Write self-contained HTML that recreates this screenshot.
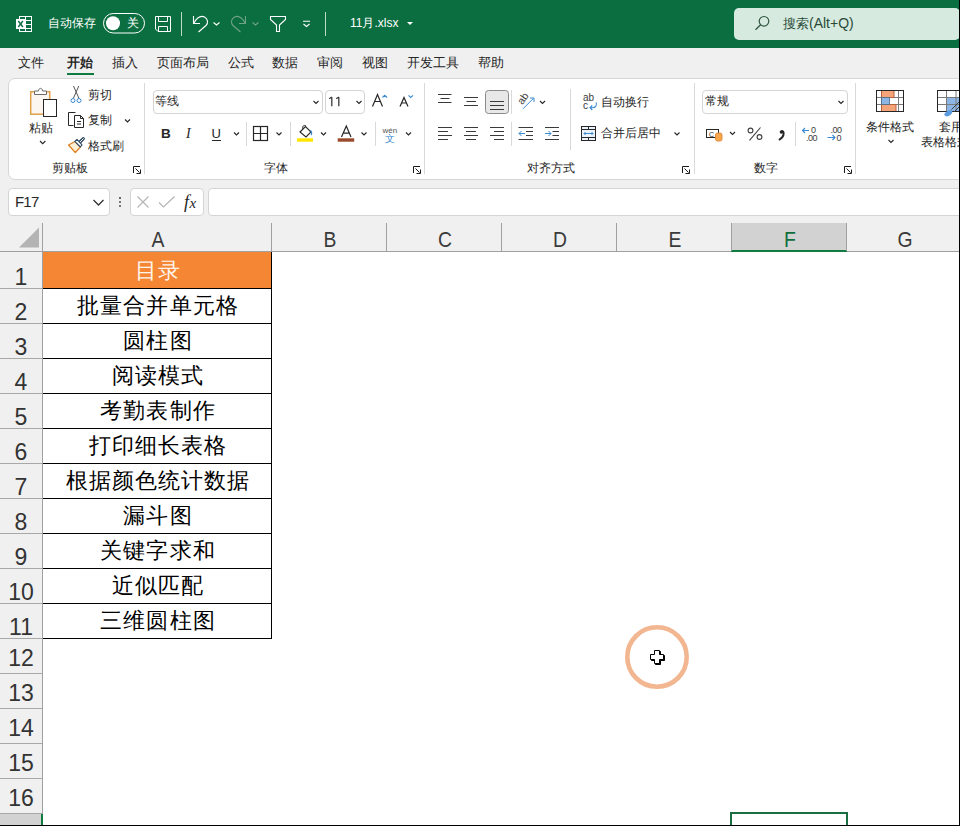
<!DOCTYPE html>
<html><head><meta charset="utf-8">
<style>
*{box-sizing:border-box;margin:0;padding:0}
html,body{width:960px;height:826px;overflow:hidden;background:#F0F0F0;font-family:"Liberation Sans",sans-serif;color:#262626}
.a{position:absolute;white-space:nowrap}
svg{position:absolute;left:0;top:0;overflow:visible}
#title{left:0;top:0;width:960px;height:48px;background:#0B6E40}
#ribbon{left:8px;top:78px;width:980px;height:102px;background:#fff;border:1px solid #D6D6D6;border-radius:7px}
.mt{font-size:13px;top:54px;line-height:17px;color:#262626}
.rl{font-size:12px;line-height:16px;color:#262626}
.sep{position:absolute;width:1px;background:#D9D9D9}
.box{position:absolute;background:#fff;border:1px solid #D4D4D4;border-radius:4px}
.rh{position:absolute;left:0;width:42px;font-size:23px;line-height:26px;text-align:center;color:#333}
.rl2{position:absolute;left:0;width:42px;height:1px;background:#A8A8A8}
.ch{position:absolute;top:228px;margin-left:1px;width:114px;font-size:22px;line-height:24px;text-align:center;color:#3a3a3a;transform:scaleX(0.88)}
.ct{position:absolute;left:43px;width:228px;font-size:22px;line-height:30px;text-align:center;color:#000;letter-spacing:1.1px;padding-left:2px}
.bl{position:absolute;left:43px;width:229px;height:1px;background:#000}
</style></head><body>
<!-- TITLE BAR -->
<div id="title" class="a"></div>
<svg width="960" height="48">
 <g fill="none" stroke="#fff" stroke-width="1">
  <rect x="19.5" y="16.5" width="12" height="15"/>
  <path d="M25.5 16v16 M19 20.5h13 M25 24.5h7 M25 28.5h7"/>
 </g>
 <rect x="16" y="19" width="9.5" height="10" fill="#fff"/>
 <path d="M18.3 21l4.6 6 M22.9 21l-4.6 6" stroke="#0B6E40" stroke-width="1.4"/>
 <rect x="103.5" y="13.5" width="41" height="19.5" rx="9.75" fill="none" stroke="#fff"/>
 <circle cx="113" cy="23.2" r="7" fill="#fff"/>
 <g fill="none" stroke="#fff" stroke-width="1">
  <path d="M155.5 16.5H170.5V31.5H158L155.5 29Z M158.5 16.5V21.5H167.5V16.5 M158.5 31.5V26.5H167.5V31.5"/>
 </g>
 <rect x="181" y="12" width="1" height="24" fill="#BFD9C9"/>
 <g fill="none" stroke="#fff" stroke-width="1.1">
  <path d="M193.5 16V23.5H200"/>
  <path d="M194 23C197 17.5 201 15.5 204.5 17 C208 19 208.5 23 206 25.5 L198.5 32"/>
  <path d="M213.5 22.5L216.5 25L219.5 22.5"/>
 </g>
 <g fill="none" stroke="#6FA287" stroke-width="1.1">
  <path d="M245.5 16V23.5H239"/>
  <path d="M245 23C242 17.5 238 15.5 234.5 17 C231 19 230.5 23 233 25.5 L240.5 32"/>
  <path d="M252.5 22.5L255.5 25L258.5 22.5"/>
 </g>
 <path d="M270.5 16.5H285.5V19.5L279.5 25V31.5H276.5V25L270.5 19.5Z" fill="none" stroke="#fff" stroke-width="1.1"/>
 <path d="M303 21.2H310 M303.5 24L306.5 26.5L309.5 24" fill="none" stroke="#fff" stroke-width="1.1"/>
 <rect x="325" y="12" width="1" height="24" fill="#BFD9C9"/>
 <path d="M407 22H413L410 25Z" fill="#fff"/>
</svg>
<div class="a" style="left:48px;top:15px;font-size:12px;line-height:16px;color:#fff">自动保存</div>
<div class="a" style="left:127px;top:15px;font-size:12px;line-height:16px;color:#fff">关</div>
<div class="a" style="left:350px;top:15px;font-size:12px;line-height:17px;color:#fff">11月.xlsx</div>
<div class="a" style="left:734px;top:8px;width:226px;height:32px;background:#D6EADF;border-radius:5px"></div>
<svg width="960" height="48">
 <circle cx="764" cy="21.3" r="4.8" fill="none" stroke="#30563F" stroke-width="1.2"/>
 <path d="M760.6 24.7L755.5 29.8" stroke="#30563F" stroke-width="1.3"/>
</svg>
<div class="a" style="left:783px;top:15px;font-size:13px;line-height:17px;color:#2A4A38">搜索<span style="font-size:14px">(Alt+Q)</span></div>
<!-- MENU -->
<div class="a mt" style="left:18px">文件</div>
<div class="a mt" style="left:67px;font-weight:bold">开始</div>
<div class="a" style="left:67px;top:73px;width:27px;height:2px;background:#107C41"></div>
<div class="a mt" style="left:112px">插入</div>
<div class="a mt" style="left:157px">页面布局</div>
<div class="a mt" style="left:228px">公式</div>
<div class="a mt" style="left:272px">数据</div>
<div class="a mt" style="left:317px">审阅</div>
<div class="a mt" style="left:362px">视图</div>
<div class="a mt" style="left:407px">开发工具</div>
<div class="a mt" style="left:478px">帮助</div>
<!-- RIBBON -->
<div id="ribbon" class="a"></div>
<div class="a rl" style="left:29px;top:120px">粘贴</div>
<div class="a rl" style="left:88px;top:87px">剪切</div>
<div class="a rl" style="left:88px;top:112px">复制</div>
<div class="a rl" style="left:88px;top:138px">格式刷</div>
<div class="a rl" style="left:52px;top:160px">剪贴板</div>
<div class="a rl" style="left:264px;top:160px">字体</div>
<div class="a rl" style="left:527px;top:160px">对齐方式</div>
<div class="a rl" style="left:601px;top:94px">自动换行</div>
<div class="a rl" style="left:601px;top:125px">合并后居中</div>
<div class="a rl" style="left:754px;top:160px">数字</div>
<div class="a rl" style="left:866px;top:119px">条件格式</div>
<div class="a rl" style="left:939px;top:119px">套用</div>
<div class="a rl" style="left:921px;top:134px">表格格式</div>
<div class="sep" style="left:144px;top:83px;height:91px"></div>
<div class="sep" style="left:424px;top:83px;height:91px"></div>
<div class="sep" style="left:694px;top:83px;height:91px"></div>
<div class="sep" style="left:855px;top:83px;height:91px"></div>
<div class="sep" style="left:246px;top:122px;height:24px"></div>
<div class="sep" style="left:290px;top:122px;height:24px"></div>
<div class="sep" style="left:375px;top:122px;height:24px"></div>
<div class="sep" style="left:511px;top:90px;height:24px"></div>
<div class="sep" style="left:511px;top:122px;height:24px"></div>
<div class="sep" style="left:570px;top:89px;height:61px"></div>
<div class="sep" style="left:795px;top:122px;height:24px"></div>
<div class="box" style="left:153px;top:90px;width:170px;height:24px"></div>
<div class="box" style="left:325px;top:90px;width:40px;height:24px"></div>
<div class="box" style="left:702px;top:90px;width:146px;height:24px"></div>
<div class="a rl" style="left:155px;top:93px">等线</div>

<div class="a rl" style="left:705px;top:93px">常规</div>
<svg width="960" height="190">
 <!-- clipboard -->
 <rect x="30.7" y="91.7" width="19" height="22.5" fill="#FBF6EF" stroke="#E0A04A" stroke-width="1.5"/>
 <path d="M34.5 94.5V91H38.5C38.5 87.5 42.5 87.5 42.5 91H46.5V94.5Z" fill="#fff" stroke="#6B6B6B" stroke-width="1"/>
 <rect x="43.5" y="99.5" width="13" height="17" fill="#fff" stroke="#262626" stroke-width="1"/>
 <!-- chevrons -->
 <g fill="none" stroke="#262626" stroke-width="1.1">
  <path d="M40 141L42.7 143.7L45.4 141"/>
  <path d="M125 119.5L127.5 122L130 119.5"/>
  <path d="M313.5 101L316 103.5L318.5 101"/>
  <path d="M356.5 101L359 103.5L361.5 101"/>
  <path d="M234 132.5L236.5 135L239 132.5"/>
  <path d="M276.5 132.5L279 135L281.5 132.5"/>
  <path d="M321 132.5L323.5 135L326 132.5"/>
  <path d="M361.5 132.5L364 135L366.5 132.5"/>
  <path d="M406 132.5L408.5 135L411 132.5"/>
  <path d="M540 101L542.5 103.5L545 101"/>
  <path d="M674.5 132.5L677 135L679.5 132.5"/>
  <path d="M838.5 101L841 103.5L843.5 101"/>
  <path d="M730 132L732.5 134.5L735 132"/>
  <path d="M888.5 140L891 142.5L893.5 140"/>
 </g>
 <!-- scissors -->
 <path d="M73.5 86L79 98.5 M78.8 86L73.3 98.5" stroke="#555" stroke-width="1"/>
 <circle cx="73" cy="100.5" r="2" fill="none" stroke="#3A8AD0" stroke-width="1"/>
 <circle cx="79" cy="100.5" r="2" fill="none" stroke="#3A8AD0" stroke-width="1"/>
 <!-- copy -->
 <path d="M75.5 112.5H68.5V125.5H73.5" fill="none" stroke="#262626" stroke-width="1"/>
 <path d="M74.5 115.5H80.5L83.5 118.5V127.5H74.5Z M80.5 115.5V118.5H83.5 M77 121.5H81 M77 124H81" fill="#fff" stroke="#262626" stroke-width="1"/>
 <!-- format painter -->
 <path d="M75 141.5L68.5 145L75.3 152.5L80.5 147Z" fill="#FFF0D6" stroke="#E07F1F" stroke-width="1.2" stroke-linejoin="round"/>
 <path d="M79 143L83.3 138.7" stroke="#2E4A63" stroke-width="3.2" stroke-linecap="round"/>
 <path d="M79 143L83.3 138.7" stroke="#fff" stroke-width="1" stroke-linecap="round"/>
 <path d="M74.8 141.3L77 139.3L82 144.8L80.3 147Z" fill="#fff" stroke="#2E4A63" stroke-width="1.1" stroke-linejoin="round"/>
 <!-- launchers -->
 <g fill="none" stroke="#1a1a1a" stroke-width="1">
  <path d="M133.5 173V166.5H140.0 M135.5 168.5L139.5 172.5 M136.5 173.5H140.5 V169.5"/>
  <path d="M413.5 173V166.5H420.0 M415.5 168.5L419.5 172.5 M416.5 173.5H420.5 V169.5"/>
  <path d="M682.5 173V166.5H689.0 M684.5 168.5L688.5 172.5 M685.5 173.5H689.5 V169.5"/>
  <path d="M844.5 173V166.5H851.0 M846.5 168.5L850.5 172.5 M847.5 173.5H851.5 V169.5"/>
 </g>
 <path d="M331.8 97V106.2 M329.2 98.8L331.8 97 M338.8 97V106.2 M336.2 98.8L338.8 97" fill="none" stroke="#3A3A3A" stroke-width="1.3"/>
 <!-- A grow / shrink -->
 <path d="M372.5 106.5L377.5 94.5L382.5 106.5 M374.5 101.5H380.5" fill="none" stroke="#262626" stroke-width="1.2"/>
 <path d="M382.5 97.5L384.7 95.3L387 97.5" fill="none" stroke="#3A8AD0" stroke-width="1.1"/>
 <path d="M400 106.5L404 97.5L408 106.5 M401.5 103H406.5" fill="none" stroke="#262626" stroke-width="1.2"/>
 <path d="M408.5 95.3L410.7 97.5L413 95.3" fill="none" stroke="#3A8AD0" stroke-width="1.1"/>
 <!-- B I U -->
 <text x="161" y="138" font-family="Liberation Sans" font-weight="bold" font-size="13.5" fill="#262626">B</text>
 <text x="186" y="138" font-family="Liberation Serif" font-style="italic" font-size="14" fill="#262626">I</text>
 <text x="211.5" y="138" font-family="Liberation Sans" font-size="13" fill="#262626">U</text>
 <path d="M212 140.5H221" stroke="#262626" stroke-width="1"/>
 <!-- borders -->
 <rect x="253.5" y="126.5" width="14" height="14" fill="none" stroke="#262626" stroke-width="1.2"/>
 <path d="M260.5 126.5V140.5 M253.5 133.5H267.5" stroke="#262626" stroke-width="1.2"/>
 <!-- fill color -->
 <path d="M300 132L305.5 126.5L311 132L306 137L300 132Z" fill="none" stroke="#262626" stroke-width="1.1"/><path d="M303 129C302 126 304 124.5 306 126" fill="none" stroke="#262626" stroke-width="1"/>
 <path d="M310 130.5C312 131 312 134 311 135" fill="none" stroke="#3A8AD0" stroke-width="1.2"/>
 <rect x="297" y="138.3" width="16" height="3.4" fill="#FFE500"/>
 <!-- font color -->
 <path d="M341.5 137L346.3 126L351 137 M343 133.2H349.5" fill="none" stroke="#262626" stroke-width="1.2"/>
 <rect x="337.7" y="138.3" width="16.5" height="3.4" fill="#9A4A2C"/>
 <!-- wen -->
 <text x="382.5" y="133" font-family="Liberation Sans" font-size="8" fill="#555">wén</text>
 <text x="385" y="141.5" font-size="9.5" fill="#3A8AD0">文</text>
 <!-- alignment -->
 <g stroke="#3A3A3A" stroke-width="1">
  <path d="M438 94.5H451.5 M440.5 98.5H449.5 M438 102.5H451.5"/>
  <path d="M464 97.5H478 M466.5 101.5H476 M464 105.5H478"/>
  <path d="M438 127.5H452 M438 131.5H448 M438 135.5H452 M438 139.5H448"/>
  <path d="M464 127.5H478 M466 131.5H476 M464 135.5H478 M466 139.5H476"/>
  <path d="M490 127.5H504 M494 131.5H504 M490 135.5H504 M494 139.5H504"/>
  <path d="M518.5 127.5H533 M526 131.5H533 M526 135.5H533 M518.5 139.5H533"/>
  <path d="M545 127.5H559 M552.5 131.5H559 M552.5 135.5H559 M545 139.5H559"/>
 </g>
 <rect x="485.5" y="90.5" width="23" height="23" rx="3" fill="#E8E8E8" stroke="#8A8A8A" stroke-width="1"/>
 <path d="M490 101.5H504 M490 105.5H504 M490 109.5H504" stroke="#3A3A3A" stroke-width="1"/>
 <path d="M525 133.5H519 M521.5 131L519 133.5L521.5 136" fill="none" stroke="#3A8AD0" stroke-width="1"/>
 <path d="M545 133.5H551 M548.5 131L551 133.5L548.5 136" fill="none" stroke="#3A8AD0" stroke-width="1"/>
 <!-- orientation ab -->
 <text x="516" y="106" font-family="Liberation Sans" font-size="10.5" fill="#3A3A3A" transform="translate(-1 -3) rotate(-55 522 100)">ab</text>
 <path d="M523 108.8L533.5 98.3 M530 98H534V102" fill="none" stroke="#3A8AD0" stroke-width="1"/>
 <!-- wrap -->
 <text x="583" y="101.3" font-family="Liberation Sans" font-size="10" fill="#3A3A3A">ab</text>
 <text x="583" y="108.8" font-family="Liberation Sans" font-size="10" fill="#3A3A3A">c</text>
 <path d="M596 102.5C597.5 105 595.5 108 592 107.8H590 M592.3 105.5L590 107.8L592.3 110" fill="none" stroke="#3A8AD0" stroke-width="1.1"/>
 <!-- merge -->
 <rect x="581.5" y="126.5" width="14" height="14" fill="#EAF3FB" stroke="#262626" stroke-width="1"/>
 <path d="M581.5 129.5H595.5 M581.5 137.5H595.5 M588.5 126.5V129.5 M588.5 137.5V140.5" stroke="#262626" stroke-width="1"/>
 <path d="M584 133.5H593 M585.5 132L584 133.5L585.5 135 M591.5 132L593 133.5L591.5 135" fill="none" stroke="#3A8AD0" stroke-width="1"/>
 <!-- currency -->
 <rect x="706.5" y="129.5" width="12" height="8" fill="none" stroke="#262626" stroke-width="1"/>
 <text x="709" y="136.5" font-family="Liberation Sans" font-size="7" fill="#262626">C</text>
 <rect x="715.5" y="133" width="6.5" height="8" rx="2" fill="#F6A650" stroke="#E07F1F" stroke-width="0.8"/>
 <!-- % , -->
 <circle cx="750.5" cy="130.5" r="2.4" fill="none" stroke="#404040" stroke-width="1.1"/><circle cx="759.5" cy="137" r="2.4" fill="none" stroke="#404040" stroke-width="1.1"/><path d="M760.5 127.5L749.5 140.3" stroke="#404040" stroke-width="1.1"/>
 <path d="M781.5 131C784 131 784.5 134.5 782 137.5 L779 140" fill="none" stroke="#262626" stroke-width="2"/>
 <circle cx="781.5" cy="132" r="1.8" fill="#262626"/>
 <!-- decimals -->
 <text x="811" y="133" font-family="Liberation Sans" font-size="9" letter-spacing="-0.5" fill="#404040">0</text>
 <text x="806" y="141" font-family="Liberation Sans" font-size="9" letter-spacing="-0.5" fill="#404040">.00</text>
 <path d="M809 130.5H802.5 M805 128L802.5 130.5L805 133" fill="none" stroke="#3A8AD0" stroke-width="1.1"/>
 <text x="830.5" y="133" font-family="Liberation Sans" font-size="9" letter-spacing="-0.5" fill="#404040">.00</text>
 <text x="836.5" y="141" font-family="Liberation Sans" font-size="9" letter-spacing="-0.5" fill="#404040">0</text>
 <path d="M827.5 137.5H835 M832.5 135L835 137.5L832.5 140" fill="none" stroke="#3A8AD0" stroke-width="1.1"/>
 <!-- cond format -->
 <rect x="876.5" y="90.5" width="27" height="21" fill="#fff"/>
 <path d="M881.5 90.5V111.5 M898.5 90.5V111.5 M876.5 97.5H903.5 M876.5 104.5H903.5" stroke="#7A7A7A" stroke-width="1" fill="none"/>
 <rect x="881.5" y="90.5" width="12.5" height="7" fill="#F5A47A" stroke="#B8603A" stroke-width="1"/>
 <rect x="881.5" y="104.5" width="14.5" height="7" fill="#F5A47A" stroke="#B8603A" stroke-width="1"/>
 <rect x="881.5" y="97.5" width="8" height="7" fill="#8DB6E6" stroke="#4A6A8A" stroke-width="0.8"/>
 <rect x="876.5" y="90.5" width="27" height="21" fill="none" stroke="#262626" stroke-width="1"/>
 <!-- table format -->
 <rect x="937.5" y="90.5" width="25" height="21" fill="#fff"/>
 <rect x="946.5" y="97.5" width="14" height="14" fill="#8DB6E6"/>
 <path d="M937.5 97.5H962 M937.5 104.5H962 M946.5 90.5V111.5 M956 90.5V111.5" stroke="#7A7A7A" stroke-width="1" fill="none"/>
 <rect x="937.5" y="90.5" width="25" height="21" fill="none" stroke="#262626" stroke-width="1"/>
 <path d="M944 114.5C946 111 949 109.5 952 110.5C953 113 951 116 946 116.5Z" fill="#5B9BE0"/>
 <path d="M951.5 109.5L960 101 M954 112L961 105" stroke="#404040" stroke-width="1" fill="none"/>
</svg>
<!-- FORMULA BAR -->
<div class="box" style="left:8px;top:188px;width:102px;height:28px"></div>
<div class="a" style="left:15px;top:193px;font-size:15px;line-height:18px;letter-spacing:-0.8px;color:#262626">F17</div>
<div class="a" style="left:119px;top:197px;width:2px;height:2px;background:#666;box-shadow:0 4px 0 #777,0 8px 0 #777"></div>
<div class="box" style="left:130px;top:188px;width:74px;height:28px"></div>
<div class="box" style="left:208px;top:188px;width:760px;height:28px"></div>
<svg width="960" height="226">
 <path d="M93.5 200L98.5 205L103.5 200" fill="none" stroke="#333" stroke-width="1.3"/>
 <path d="M137.5 196.5L148.5 207.5 M148.5 196.5L137.5 207.5" stroke="#B5B5B5" stroke-width="1.2"/>
 <path d="M159 202.5L163.5 207L174.5 196.5" fill="none" stroke="#B5B5B5" stroke-width="1.2"/>
 <text x="184" y="207.5" font-family="Liberation Serif" font-style="italic" font-size="18" fill="#262626">f<tspan font-size="15" dx="0.5">x</tspan></text>
</svg>
<!-- HEADERS -->
<div class="a" style="left:0;top:251px;width:960px;height:1px;background:#A0A0A0"></div>
<div class="a" style="left:42px;top:223px;width:1px;height:603px;background:#A0A0A0"></div>
<svg width="60" height="260"><path d="M19 247.5L39 227.5V247.5Z" fill="#B4B4B4"/></svg>
<div class="a" style="left:731px;top:223px;width:116px;height:28px;background:#D2D2D2"></div>
<div class="a" style="left:731px;top:250px;width:116px;height:2px;background:#107C41"></div>
<div class="a" style="left:271px;top:223px;width:1px;height:28px;background:#A0A0A0"></div>
<div class="a" style="left:386px;top:223px;width:1px;height:28px;background:#A0A0A0"></div>
<div class="a" style="left:501px;top:223px;width:1px;height:28px;background:#A0A0A0"></div>
<div class="a" style="left:616px;top:223px;width:1px;height:28px;background:#A0A0A0"></div>
<div class="a" style="left:731px;top:223px;width:1px;height:28px;background:#A0A0A0"></div>
<div class="a" style="left:846px;top:223px;width:1px;height:28px;background:#A0A0A0"></div>
<div class="ch" style="left:100px">A</div>
<div class="ch" style="left:272px">B</div>
<div class="ch" style="left:387px">C</div>
<div class="ch" style="left:502px">D</div>
<div class="ch" style="left:617px">E</div>
<div class="ch" style="left:732px;color:#0F6E3C">F</div>
<div class="ch" style="left:847px">G</div>
<!-- SHEET -->
<div class="a" style="left:43px;top:252px;width:916px;height:573px;background:#fff"></div>
<div class="a" style="left:43px;top:252px;width:228px;height:36px;background:#F58634"></div>
<div class="a" style="left:271px;top:252px;width:1px;height:387px;background:#000"></div>
<div class="bl" style="top:288px"></div><div class="bl" style="top:323px"></div><div class="bl" style="top:358px"></div>
<div class="bl" style="top:393px"></div><div class="bl" style="top:428px"></div><div class="bl" style="top:463px"></div>
<div class="bl" style="top:498px"></div><div class="bl" style="top:533px"></div><div class="bl" style="top:568px"></div>
<div class="bl" style="top:603px"></div><div class="bl" style="top:638px"></div>
<div class="ct" style="top:256px;color:#FFF4EA">目录</div>
<div class="ct" style="top:291px">批量合并单元格</div>
<div class="ct" style="top:326px">圆柱图</div>
<div class="ct" style="top:361px">阅读模式</div>
<div class="ct" style="top:396px">考勤表制作</div>
<div class="ct" style="top:431px">打印细长表格</div>
<div class="ct" style="top:466px">根据颜色统计数据</div>
<div class="ct" style="top:501px">漏斗图</div>
<div class="ct" style="top:536px">关键字求和</div>
<div class="ct" style="top:571px">近似匹配</div>
<div class="ct" style="top:606px">三维圆柱图</div>
<!-- ROW HEADERS -->
<div class="rl2" style="top:288px"></div><div class="rl2" style="top:323px"></div><div class="rl2" style="top:358px"></div>
<div class="rl2" style="top:393px"></div><div class="rl2" style="top:428px"></div><div class="rl2" style="top:463px"></div>
<div class="rl2" style="top:498px"></div><div class="rl2" style="top:533px"></div><div class="rl2" style="top:568px"></div>
<div class="rl2" style="top:603px"></div><div class="rl2" style="top:638px"></div><div class="rl2" style="top:673px"></div>
<div class="rl2" style="top:708px"></div><div class="rl2" style="top:743px"></div><div class="rl2" style="top:778px"></div>
<div class="rl2" style="top:813px"></div>
<div class="rh" style="top:264px">1</div>
<div class="rh" style="top:299px">2</div>
<div class="rh" style="top:334px">3</div>
<div class="rh" style="top:369px">4</div>
<div class="rh" style="top:404px">5</div>
<div class="rh" style="top:439px">6</div>
<div class="rh" style="top:474px">7</div>
<div class="rh" style="top:509px">8</div>
<div class="rh" style="top:544px">9</div>
<div class="rh" style="top:579px">10</div>
<div class="rh" style="top:614px">11</div>
<div class="rh" style="top:645px">12</div>
<div class="rh" style="top:680px">13</div>
<div class="rh" style="top:715px">14</div>
<div class="rh" style="top:750px">15</div>
<div class="rh" style="top:785px">16</div>
<div class="a" style="left:0;top:814px;width:42px;height:12px;background:#D2D2D2"></div>
<div class="a" style="left:41px;top:814px;width:2px;height:12px;background:#107C41"></div>
<!-- SELECTION F17 -->
<div class="a" style="left:730px;top:812px;width:118px;height:14px;border:2px solid #1A6E42;border-bottom:none"></div>
<!-- CURSOR -->
<svg width="960" height="826">
 <circle cx="657" cy="657" r="29.7" fill="none" stroke="#F2B690" stroke-width="4.6"/>
 <path transform="translate(1 1)" d="M654.5 650.5H659.5V654.5H663.5V659.5H659.5V663.5H654.5V659.5H650.5V654.5H654.5Z" fill="#000" stroke="#000" stroke-width="1"/><path d="M654.5 650.5H659.5V654.5H663.5V659.5H659.5V663.5H654.5V659.5H650.5V654.5H654.5Z" fill="#fff" stroke="#000" stroke-width="1"/>
</svg>
<!-- FRAME -->
<div class="a" style="left:959px;top:0;width:1px;height:826px;background:#000"></div>
<div class="a" style="left:0;top:825px;width:960px;height:1px;background:#000"></div>
</body></html>
